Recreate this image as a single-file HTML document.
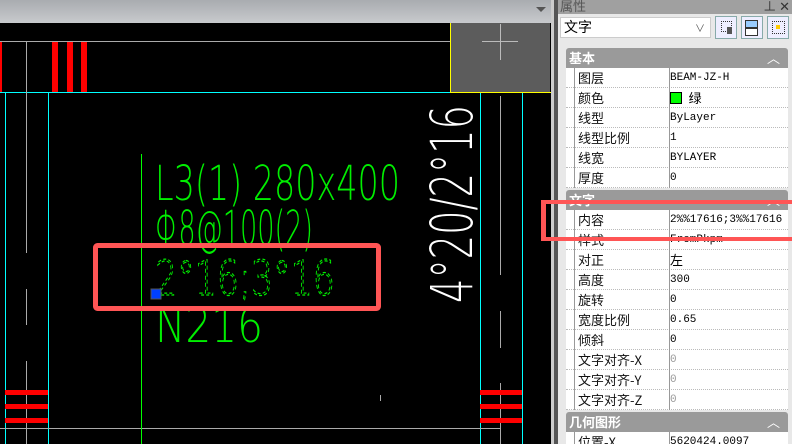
<!DOCTYPE html>
<html><head><meta charset="utf-8"><style>
html,body{margin:0;width:792px;height:444px;overflow:hidden}
body{background:#e8e8e8;font-family:"Liberation Sans","Noto Sans CJK SC",sans-serif;position:relative}
.a{position:absolute}
.row{position:absolute;left:566px;width:222px;height:20px;background:#fff;border-bottom:1px dotted #bbb;box-sizing:border-box;font-size:13px;line-height:20px}
.row .l{position:absolute;left:8px;top:0;width:96px;height:20px;border-left:1px solid #999;border-right:1px solid #999;padding-left:3px;box-sizing:border-box;font-family:"Noto Sans CJK SC",sans-serif;color:#111}
.row .v{position:absolute;left:104px;top:0;font-family:"Liberation Mono",monospace;font-size:11px;color:#000}
.hdr{position:absolute;left:566px;width:222px;height:20px;background:#9a9a9a;color:#fff;font-weight:bold;font-size:13px;line-height:20px;padding-left:3px;box-sizing:border-box;border-radius:3px 3px 0 0;font-family:"Noto Sans CJK SC",sans-serif}
.hdr span{position:absolute;right:8px;top:0;font-weight:normal}
</style></head><body>
<div class="a" style="left:0;top:0;width:551px;height:23px;background:linear-gradient(#a9acb0,#c8cacd)"></div>
<div class="a" style="left:536px;top:7px;width:0;height:0;border-left:5px solid transparent;border-right:5px solid transparent;border-top:5px solid #555"></div>
<svg class="a" style="left:0;top:23px" width="551" height="421">
<rect width="551" height="421" fill="#000"/>
<rect x="450" y="0" width="100" height="69" fill="#5c5c5c"/>
<line x1="450.5" y1="0" x2="450.5" y2="69" stroke="#ff0"/>
<line x1="450" y1="69.5" x2="551" y2="69.5" stroke="#ff0"/>
<line x1="482" y1="18.5" x2="518" y2="18.5" stroke="#bbb"/><line x1="500.5" y1="1" x2="500.5" y2="37" stroke="#bbb"/>
<line x1="0" y1="18.5" x2="450" y2="18.5" stroke="#aaa"/>
<line x1="0" y1="69.5" x2="450" y2="69.5" stroke="#0ff"/>
<rect x="0" y="19" width="2" height="50" fill="#f00"/>
<rect x="52" y="19" width="6" height="50" fill="#f00"/><rect x="67" y="19" width="6" height="50" fill="#f00"/><rect x="81" y="19" width="6" height="50" fill="#f00"/>
<g stroke="#0ff"><line x1="5.5" y1="70" x2="5.5" y2="421"/><line x1="48.5" y1="70" x2="48.5" y2="421"/><line x1="480.5" y1="70" x2="480.5" y2="421"/><line x1="522.5" y1="70" x2="522.5" y2="421"/></g>
<g stroke="#aaa"><line x1="26.5" y1="19" x2="26.5" y2="230"/><line x1="26.5" y1="266" x2="26.5" y2="302"/><line x1="26.5" y1="338" x2="26.5" y2="421"/>
<line x1="500.5" y1="73" x2="500.5" y2="252"/><line x1="500.5" y1="288" x2="500.5" y2="325"/><line x1="500.5" y1="360" x2="500.5" y2="421"/>
<line x1="0" y1="405.5" x2="500" y2="405.5"/><line x1="380.5" y1="372" x2="380.5" y2="378"/></g>
<line x1="141.5" y1="131" x2="141.5" y2="421" stroke="#0f0"/>
<g fill="#f00"><rect x="5" y="367" width="43" height="5"/><rect x="5" y="381" width="43" height="5"/><rect x="5" y="395" width="43" height="5"/>
<rect x="480" y="367" width="42" height="5"/><rect x="480" y="381" width="42" height="5"/><rect x="480" y="395" width="42" height="5"/></g>
<g font-family="DejaVu Sans,sans-serif" font-weight="200" font-size="48" fill="#0e0">
<text x="155" y="177" textLength="245" lengthAdjust="spacingAndGlyphs">L3(1) 280x400</text>
<text x="155" y="222" textLength="158" lengthAdjust="spacingAndGlyphs">Φ8@100(2)</text>
<text x="155" y="272" textLength="180" lengthAdjust="spacingAndGlyphs" fill="none" stroke="#0e0" stroke-width="1.2" stroke-dasharray="4 3">2°16;3°16</text>
<text x="155" y="319" textLength="108" lengthAdjust="spacingAndGlyphs">N216</text>
</g>
<text transform="translate(472,280) rotate(-90)" font-family="DejaVu Sans,sans-serif" font-weight="200" font-size="58" fill="#fff" textLength="198" lengthAdjust="spacingAndGlyphs">4°20/2°16</text>
<rect x="151" y="266" width="10" height="10" fill="#0040ff" stroke="#555"/>
<rect x="95.5" y="222.5" width="283" height="63" fill="none" stroke="#f55" stroke-width="5" rx="2"/>
</svg>
<div class="a" style="left:551px;top:0;width:3px;height:444px;background:#ccc"></div>
<div class="a" style="left:554px;top:0;width:4px;height:444px;background:#555"></div>
<div class="a" style="left:558px;top:0;width:234px;height:14px;background:#a0a0a0;color:#555;font-size:13px;line-height:12px;padding-left:2px;font-family:'Noto Sans CJK SC',sans-serif">属性<span style="position:absolute;right:4px;color:#333">⊥ ✕</span></div>
<div class="a" style="left:560px;top:17px;width:151px;height:21px;background:#fff;border:1px solid #ccc;box-sizing:border-box;font-size:14px;line-height:19px;padding-left:3px;font-family:'Noto Sans CJK SC',sans-serif">文字<span style="position:absolute;right:5px;color:#555;font-size:10px">∨</span></div>
<div class="a" style="left:715px;top:16px;width:22px;height:23px;border:1px solid #8aa;background:#eef;box-sizing:border-box"><div class="a" style="left:5px;top:4px;width:9px;height:9px;border:1px dotted #333"></div><div class="a" style="left:11px;top:10px;width:5px;height:7px;background:#555"></div></div>
<div class="a" style="left:741px;top:16px;width:22px;height:23px;border:1px solid #8aa;background:#eef;box-sizing:border-box"><div class="a" style="left:3px;top:3px;width:11px;height:6px;border:1px solid #333;background:#9cf"></div><div class="a" style="left:3px;top:11px;width:11px;height:6px;border:1px solid #333;background:#fff"></div></div>
<div class="a" style="left:767px;top:16px;width:22px;height:23px;border:1px solid #8aa;background:#eef;box-sizing:border-box"><div class="a" style="left:4px;top:4px;width:11px;height:11px;border:1px dotted #333"></div><div class="a" style="left:8px;top:8px;width:4px;height:4px;background:#fc0"></div></div>
<div class="hdr" style="top:48px">基本<span>︿</span></div>
<div class="row" style="top:68px"><div class="l">图层</div><div class="v">BEAM-JZ-H</div></div>
<div class="row" style="top:88px"><div class="l">颜色</div><div class="v"><span style="display:inline-block;width:10px;height:10px;background:#0f0;border:1px solid #000;vertical-align:-1px"></span> <span style="font-family:'Noto Sans CJK SC';font-size:13px">绿</span></div></div>
<div class="row" style="top:108px"><div class="l">线型</div><div class="v">ByLayer</div></div>
<div class="row" style="top:128px"><div class="l">线型比例</div><div class="v">1</div></div>
<div class="row" style="top:148px"><div class="l">线宽</div><div class="v">BYLAYER</div></div>
<div class="row" style="top:168px"><div class="l">厚度</div><div class="v">0</div></div>
<div class="hdr" style="top:190px">文字<span>︿</span></div>
<div class="row" style="top:210px"><div class="l">内容</div><div class="v">2%%17616;3%%17616</div></div>
<div class="row" style="top:230px"><div class="l">样式</div><div class="v">FromPkpm</div></div>
<div class="row" style="top:250px"><div class="l">对正</div><div class="v" style="font-family:'Noto Sans CJK SC';font-size:13px">左</div></div>
<div class="row" style="top:270px"><div class="l">高度</div><div class="v">300</div></div>
<div class="row" style="top:290px"><div class="l">旋转</div><div class="v">0</div></div>
<div class="row" style="top:310px"><div class="l">宽度比例</div><div class="v">0.65</div></div>
<div class="row" style="top:330px"><div class="l">倾斜</div><div class="v">0</div></div>
<div class="row" style="top:350px"><div class="l">文字对齐-X</div><div class="v" style="color:#999">0</div></div>
<div class="row" style="top:370px"><div class="l">文字对齐-Y</div><div class="v" style="color:#999">0</div></div>
<div class="row" style="top:390px"><div class="l">文字对齐-Z</div><div class="v" style="color:#999">0</div></div>
<div class="hdr" style="top:412px">几何图形<span>︿</span></div>
<div class="row" style="top:432px"><div class="l">位置-X</div><div class="v">5620424.0097</div></div>
<div class="a" style="left:541px;top:200px;width:246px;height:33px;border:4px solid #f55;border-left-width:5px"></div>
</body></html>
